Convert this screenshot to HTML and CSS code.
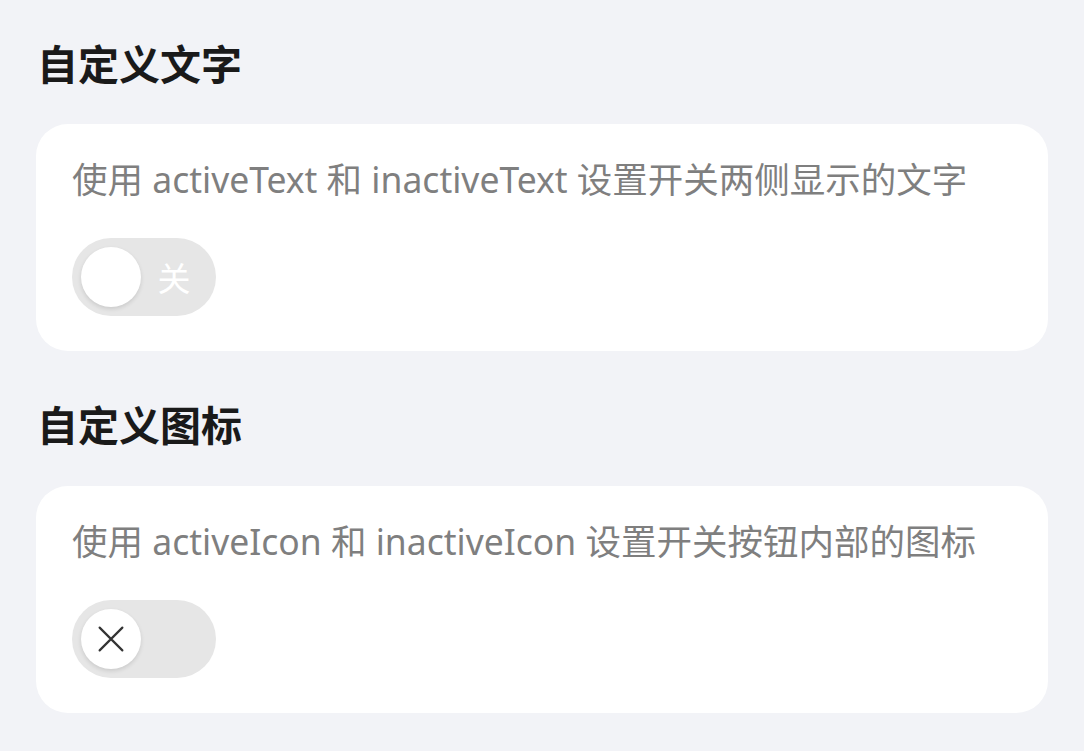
FILE: index.html
```html
<!DOCTYPE html>
<html lang="zh-CN">
<head>
<meta charset="utf-8">
<title>Switch</title>
<link rel="stylesheet" href="styles.css">
</head>
<body>
  <section class="section">
    <h2 class="section-title">自定义文字</h2>
    <div class="card">
      <p class="desc">使用 activeText 和 inactiveText 设置开关两侧显示的文字</p>
      <div class="switch">
        <span class="knob"></span>
        <span class="switch-label">关</span>
      </div>
    </div>
  </section>
  <section class="section">
    <h2 class="section-title">自定义图标</h2>
    <div class="card">
      <p class="desc">使用 activeIcon 和 inactiveIcon 设置开关按钮内部的图标</p>
      <div class="switch">
        <span class="knob">
          <svg class="knob-icon" viewBox="0 0 24 24" width="26" height="26">
            <path d="M1.5 1.5 L22.5 22.5 M22.5 1.5 L1.5 22.5" stroke="#333333" stroke-width="2" stroke-linecap="round" fill="none"/>
          </svg>
        </span>
        <span class="switch-label"></span>
      </div>
    </div>
  </section>
</body>
</html>
```

FILE: styles.css
```css
html, body {
  margin: 0;
  padding: 0;
}
body {
  background: #f2f3f7;
  font-family: "Noto Sans", "Noto Sans CJK SC", sans-serif;
  padding: 0 36px;
  width: 1012px;
}
.section-title {
  margin: 0;
  padding: 34px 0 34px 1px;
  font-size: 41px;
  line-height: 56px;
  font-weight: 700;
  color: #1a1a1a;
  font-family: "Noto Sans CJK SC", sans-serif;
}
.section + .section .section-title {
  padding-top: 44px;
  padding-bottom: 35px;
}
.card {
  background: #ffffff;
  border-radius: 32px;
  padding: 31px 36px 35px 36px;
}
.desc {
  margin: 0 0 35px 0;
  font-size: 35.5px;
  line-height: 48px;
  color: #7f7f7f;
  white-space: nowrap;
}
.switch {
  display: flex;
  align-items: center;
  width: 144px;
  height: 78px;
  box-sizing: border-box;
  padding: 0 9px;
  border-radius: 39px;
  background: #e6e6e6;
}
.knob {
  flex: none;
  width: 60px;
  height: 60px;
  border-radius: 50%;
  background: #ffffff;
  box-shadow: 0 2px 4px rgba(0, 0, 0, 0.12);
  display: flex;
  align-items: center;
  justify-content: center;
}
.switch-label {
  flex: 1;
  text-align: center;
  color: #ffffff;
  font-size: 33px;
  line-height: 40px;
  font-family: "Noto Sans CJK SC", sans-serif;
}
```
